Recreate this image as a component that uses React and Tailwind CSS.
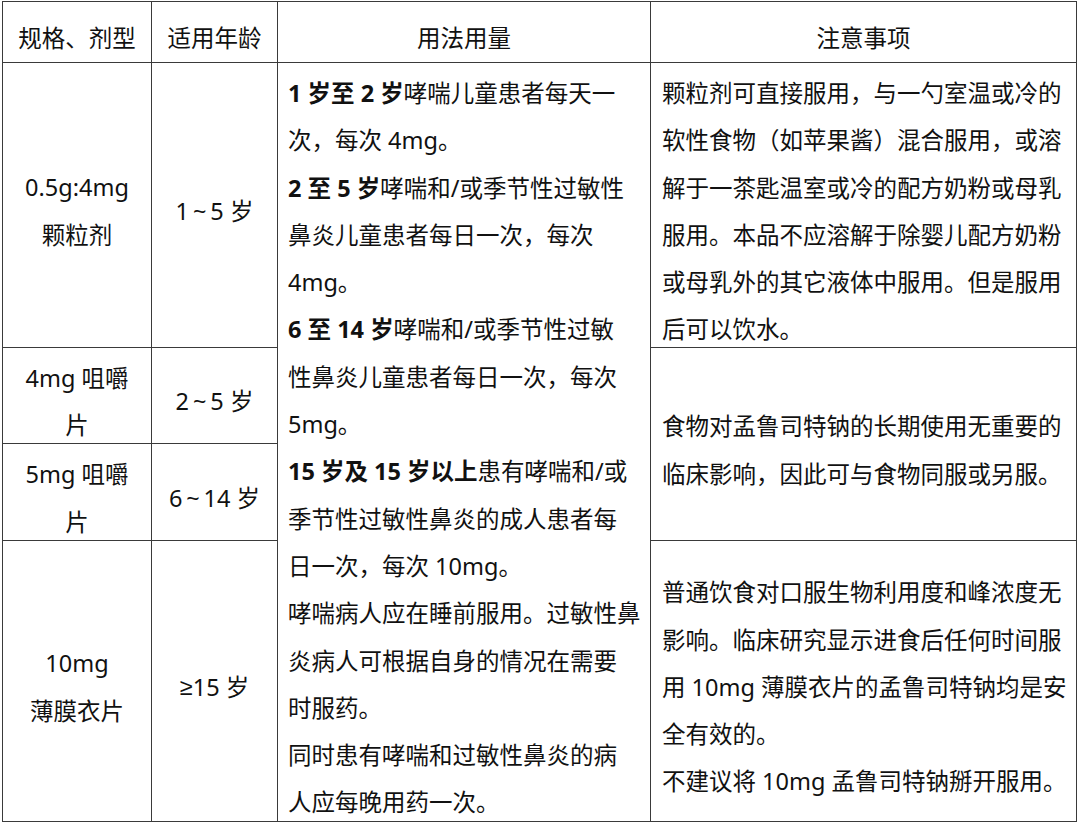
import React from "react";

const cell = "bg-white flex";
const center = "items-center justify-center text-center pt-[13px]";
const mid = "items-center pt-[13px]";
const full = "items-start pt-[7px]";

function B({ children }) {
  return <span className="font-bold">{children}</span>;
}

export default function App() {
  return (
    <div className="w-[1080px] h-[825px] bg-white overflow-hidden">
      <div className="mt-px ml-[2px] w-[1075px] grid grid-cols-[148px_125px_372px_425px] grid-rows-[60px_284px_95px_96px_280px] gap-px p-px bg-[#3a3a3a] text-[23.5px] leading-[47.3px] text-[#111] font-[family-name:'Noto_Sans','Noto_Sans_CJK_SC',sans-serif]">
        {/* header */}
        <div className={`${cell} ${center} col-start-1 row-start-1`}>规格、剂型</div>
        <div className={`${cell} ${center} col-start-2 row-start-1`}>适用年龄</div>
        <div className={`${cell} ${center} col-start-3 row-start-1`}>用法用量</div>
        <div className={`${cell} ${center} col-start-4 row-start-1`}>注意事项</div>

        {/* column 1 */}
        <div className={`${cell} ${center} col-start-1 row-start-2`}>
          <div>0.5g:4mg<br />颗粒剂</div>
        </div>
        <div className={`${cell} ${center} col-start-1 row-start-3`}>
          <div>4mg 咀嚼<br />片</div>
        </div>
        <div className={`${cell} ${center} col-start-1 row-start-4`}>
          <div>5mg 咀嚼<br />片</div>
        </div>
        <div className={`${cell} ${center} col-start-1 row-start-5`}>
          <div>10mg<br />薄膜衣片</div>
        </div>

        {/* column 2 */}
        <div className={`${cell} ${center} col-start-2 row-start-2`}>1{"\u2009"}~{"\u2009"}5 岁</div>
        <div className={`${cell} ${center} col-start-2 row-start-3`}>2{"\u2009"}~{"\u2009"}5 岁</div>
        <div className={`${cell} ${center} col-start-2 row-start-4`}>6{"\u2009"}~{"\u2009"}14 岁</div>
        <div className={`${cell} ${center} col-start-2 row-start-5`}>
          <span className="font-[family-name:'Liberation_Sans',sans-serif]">≥</span>15 岁
        </div>

        {/* column 3 */}
        <div className={`${cell} ${full} col-start-3 row-start-2 row-span-4 pl-[10px] whitespace-nowrap`}>
          <div>
            <B>1 岁至 2 岁</B>哮喘儿童患者每天一<br />
            次，每次 4mg。<br />
            <B>2 至 5 岁</B>哮喘和/或季节性过敏性<br />
            鼻炎儿童患者每日一次，每次<br />
            4mg。<br />
            <B>6 至 14 岁</B>哮喘和/或季节性过敏<br />
            性鼻炎儿童患者每日一次，每次<br />
            5mg。<br />
            <B>15 岁及 15 岁以上</B>患有哮喘和/或<br />
            季节性过敏性鼻炎的成人患者每<br />
            日一次，每次 10mg。<br />
            哮喘病人应在睡前服用。过敏性鼻<br />
            炎病人可根据自身的情况在需要<br />
            时服药。<br />
            同时患有哮喘和过敏性鼻炎的病<br />
            人应每晚用药一次。
          </div>
        </div>

        {/* column 4 */}
        <div className={`${cell} ${full} col-start-4 row-start-2 pl-[11px] whitespace-nowrap`}>
          <div>
            颗粒剂可直接服用，与一勺室温或冷的<br />
            软性食物（如苹果酱）混合服用，或溶<br />
            解于一茶匙温室或冷的配方奶粉或母乳<br />
            服用。本品不应溶解于除婴儿配方奶粉<br />
            或母乳外的其它液体中服用。但是服用<br />
            后可以饮水。
          </div>
        </div>
        <div className={`${cell} ${mid} col-start-4 row-start-3 row-span-2 pl-[11px] whitespace-nowrap`}>
          <div>
            食物对孟鲁司特钠的长期使用无重要的<br />
            临床影响，因此可与食物同服或另服。
          </div>
        </div>
        <div className={`${cell} ${mid} col-start-4 row-start-5 pl-[11px] whitespace-nowrap`}>
          <div>
            普通饮食对口服生物利用度和峰浓度无<br />
            影响。临床研究显示进食后任何时间服<br />
            用 10mg 薄膜衣片的孟鲁司特钠均是安<br />
            全有效的。<br />
            不建议将 10mg 孟鲁司特钠掰开服用。
          </div>
        </div>
      </div>
    </div>
  );
}
